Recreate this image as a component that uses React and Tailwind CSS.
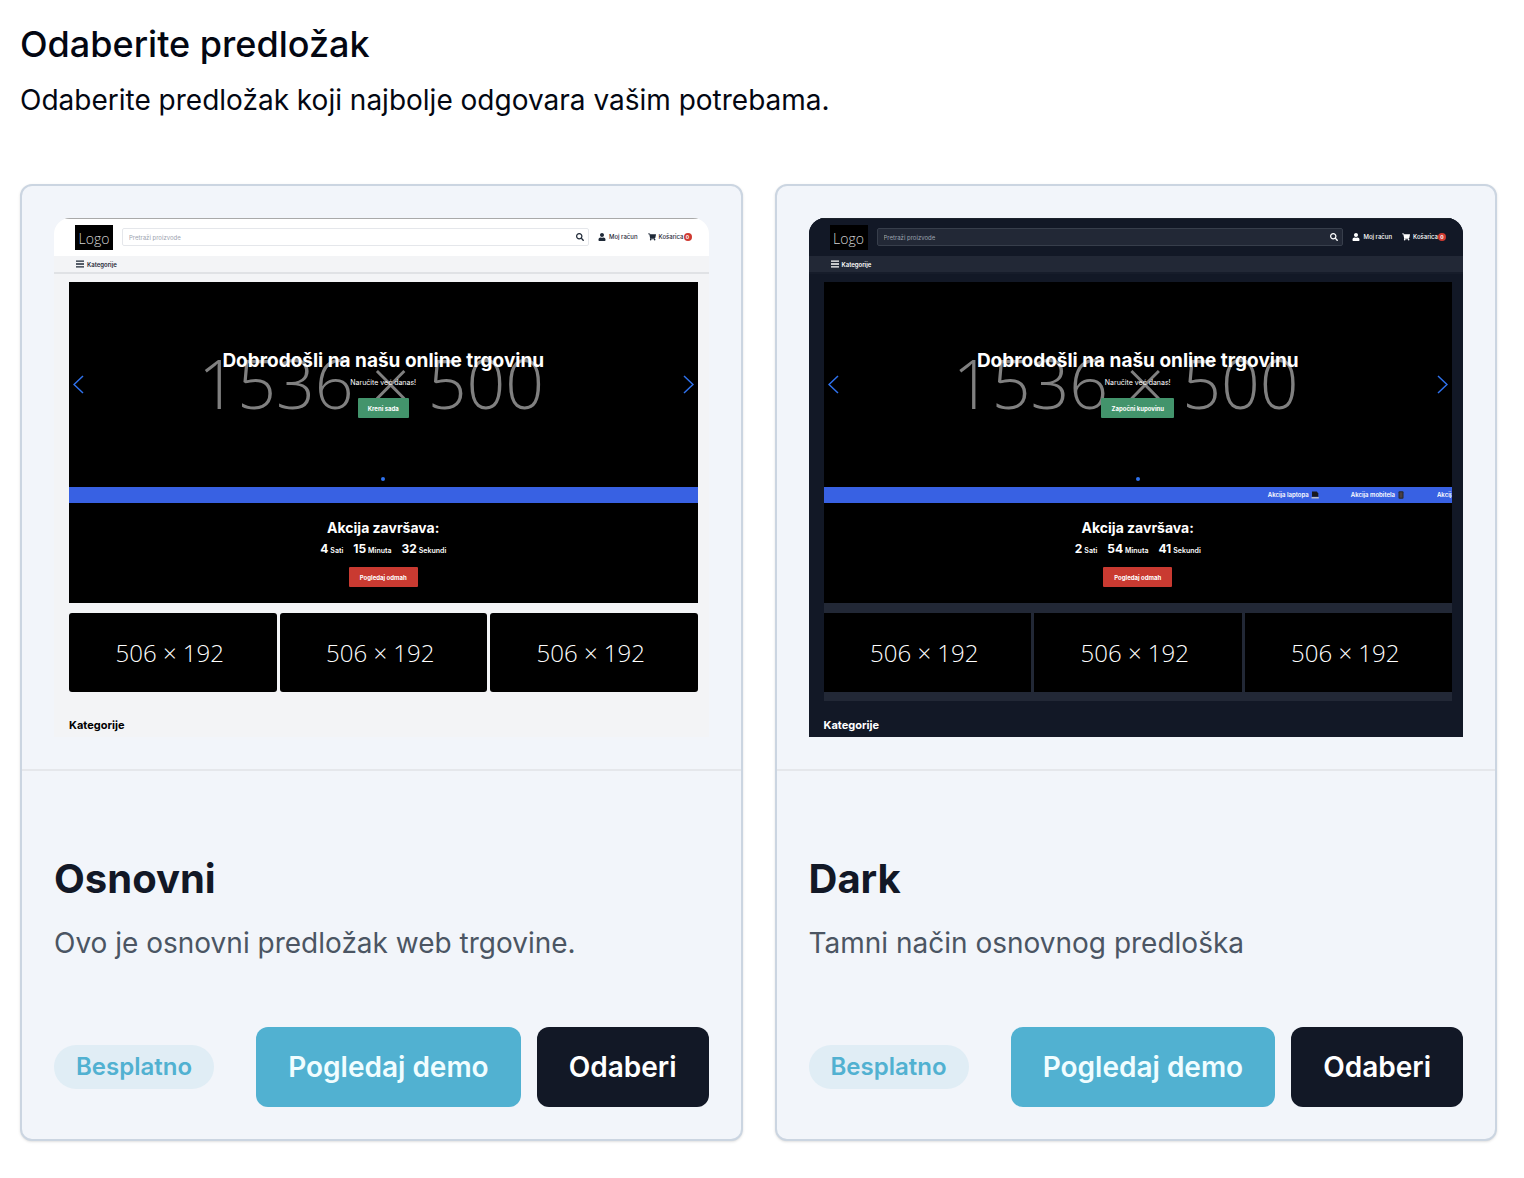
import React from "react";
import { FaSearch, FaShoppingCart, FaUser } from "react-icons/fa";

const light = {
  page: "bg-[#f3f4f6] text-black",
  header: "bg-white border-[#a9a9a9]",
  search: "bg-white border-[#e5e7eb] placeholder:text-[#9ca3af]",
  icon: "text-[#1f2937]",
  nav: "bg-[#f3f4f6] border-[#e0e2e5]",
  offers: "",
  tile: "rounded-[3px]",
};

const dark = {
  page: "bg-[#121826] text-white",
  header: "bg-[#121826] border-[#1c222b]",
  search: "bg-[#222836] border-[#373e4b] placeholder:text-[#9ca3af]",
  icon: "text-white",
  nav: "bg-[#222836] border-[#161c2a]",
  offers: "bg-[#222836]",
  tile: "",
};

const templates = [
  {
    id: "osnovni",
    name: "Osnovni",
    description: "Ovo je osnovni predložak web trgovine.",
    theme: light,
    cta: "Kreni sada",
    time: ["4", "15", "32"],
    ticker: false,
  },
  {
    id: "dark",
    name: "Dark",
    description: "Tamni način osnovnog predloška",
    theme: dark,
    cta: "Započni kupovinu",
    time: ["2", "54", "41"],
    ticker: true,
  },
];

const units = ["Sati", "Minuta", "Sekundi"];

function Chevron({ flip }) {
  return (
    <svg viewBox="0 0 11 19" className="h-[19px] w-[11px]" fill="none" stroke="#2f72ee" strokeWidth="1.5" aria-hidden="true">
      <path d={flip ? "M1 1l9 8.500L1 18" : "M10 1L1 9.500l9 8.500"} />
    </svg>
  );
}

function Bars() {
  return (
    <svg viewBox="0 0 8 8" className="size-2" fill="none" stroke="currentColor" strokeWidth="1.3" aria-hidden="true">
      <path d="M0 1.200h8M0 4h8M0 6.800h8" />
    </svg>
  );
}

function Laptop() {
  return (
    <svg viewBox="0 0 8 8" className="size-2" aria-hidden="true">
      <path d="M1 .5h4.800l1.500 2v3.300H1z" fill="#18181b" />
      <path d="M.5 6h7.300v1.500H.5z" fill="#b9bcc4" />
    </svg>
  );
}

function Phone() {
  return (
    <svg viewBox="0 0 8 8" className="size-2" aria-hidden="true">
      <rect x="1.500" y=".3" width="5" height="7.400" rx="1" fill="#27272a" />
      <rect x="2.500" y="1.300" width="3" height="5.400" fill="#4a4046" />
    </svg>
  );
}

function StorePreview({ id, theme, cta, time, ticker }) {
  return (
    <div className={`overflow-hidden rounded-t-2xl ${theme.page}`}>
      <div className={`flex h-[38px] items-center border-t pr-[17px] pb-px pl-[21px] ${theme.header}`}>
        <div className="flex h-[25px] w-[38px] items-center justify-center bg-black pt-1 font-['Open_Sans'] text-[14px] leading-5 font-light text-[#d4d4d4]">
          Logo
        </div>
        <div className="relative ml-[9px] flex flex-1 items-center">
          <input
            id={`search-${id}`}
            type="text"
            aria-label="Pretraži proizvode"
            placeholder="Pretraži proizvode"
            className={`h-[18px] w-full rounded-[2px] border px-[6px] text-[6px] outline-none ${theme.search}`}
          />
          <button type="button" aria-label="Traži" className={`absolute right-[5px] ${theme.icon}`}>
            <FaSearch className="size-2" />
          </button>
        </div>
        <a href="#racun" className={`ml-[9px] flex items-center gap-[3px] text-[6px] leading-[8px] font-medium ${theme.icon}`}>
          <FaUser className="size-2" />
          Moj račun
        </a>
        <a href="#kosarica" className={`ml-[10px] flex items-center text-[6px] leading-[8px] font-medium ${theme.icon}`}>
          <FaShoppingCart className="mr-[3px] size-2" />
          Košarica
          <span className="flex size-[8px] items-center justify-center rounded-full bg-[#cf3a31] text-[5px] font-bold text-white">0</span>
        </a>
      </div>
      <div className={`flex h-[18px] items-center gap-[3px] border-b-2 pl-[22px] text-[6px] font-semibold ${theme.nav} ${theme.icon}`}>
        <Bars />
        Kategorije
      </div>

      <div className="mt-2 mr-[11px] ml-[15px]">
        <div className="relative flex h-[205px] flex-col items-center overflow-hidden bg-black pt-[67px] text-white">
          <div className="absolute inset-x-0 top-[53px] pr-6 text-center font-['Open_Sans'] text-[68px] leading-[96px] font-light whitespace-nowrap text-[#808080]">
            1536 × 500
          </div>
          <h3 className="relative text-[19px] leading-6 font-bold whitespace-nowrap">Dobrodošli na našu online trgovinu</h3>
          <p className="relative mt-[5px] text-[7px] leading-[10px]">Naručite već danas!</p>
          <button type="button" className="relative mt-[10px] h-5 rounded-[1px] bg-[#43946c] px-[10px] text-[6px] font-bold">
            {cta}
          </button>
          <button type="button" aria-label="Prethodno" className="absolute top-[93px] left-1">
            <Chevron />
          </button>
          <button type="button" aria-label="Sljedeće" className="absolute top-[93px] right-1">
            <Chevron flip />
          </button>
          <span className="absolute bottom-[6px] left-1/2 size-[4px] -translate-x-1/2 rounded-full bg-[#2f72ee]" />
        </div>

        <div className="flex h-4 items-center justify-end overflow-hidden bg-[#3861e3] text-[6px] leading-4 font-semibold whitespace-nowrap text-white">
          {ticker && (
            <>
              <span className="flex items-center gap-[2px]">Akcija laptopa <Laptop /></span>
              <span className="ml-8 flex items-center gap-[2px]">Akcija mobitela <Phone /></span>
              <span className="ml-8 w-[15px] overflow-hidden">Akcija</span>
            </>
          )}
        </div>

        <div className="flex flex-col items-center bg-black pt-[15px] pb-4 text-white">
          <h4 className="text-[14px] leading-5 font-bold">Akcija završava:</h4>
          <div className="mt-1 flex h-4 items-center gap-[10px]">
            {time.map((value, i) => (
              <div key={units[i]} className="flex items-baseline gap-[2px] leading-4">
                <span className="text-[12px] font-bold">{value}</span>
                <span className="text-[7px] font-semibold">{units[i]}</span>
              </div>
            ))}
          </div>
          <button type="button" className="mt-[9px] h-5 rounded-[1px] bg-[#c93a31] px-[11px] text-[6px] font-bold">
            Pogledaj odmah
          </button>
        </div>

        <div className={`grid grid-cols-3 gap-[3px] pt-[10px] pb-[9px] ${theme.offers}`}>
          {[0, 1, 2].map((n) => (
            <div
              key={n}
              className={`flex h-[79px] items-center justify-center bg-black pr-[6px] font-['Open_Sans'] text-[24px] font-light text-white ${theme.tile}`}
            >
              506 × 192
            </div>
          ))}
        </div>
        <h4 className="pt-[15px] pb-[3px] text-[11px] leading-[18px] font-bold">Kategorije</h4>
      </div>
    </div>
  );
}

function TemplateCard({ template }) {
  return (
    <article className="rounded-xl border-2 border-[#cbd5e1] bg-[#f2f5fa] shadow-sm">
      <div className="border-b-2 border-[#e5e7eb] p-8">
        <StorePreview {...template} />
      </div>
      <div className="px-8 pt-[88px] pb-8">
        <h2 className="text-[40px] leading-10 font-bold text-[#121826]">{template.name}</h2>
        <p className="mt-6 text-[28px] leading-10 text-[#4b5563]">{template.description}</p>
        <div className="mt-16 flex items-center justify-between">
          <span className="rounded-full bg-[#e0edf5] px-[22px] py-1.5 text-[24px] leading-8 font-semibold text-[#51b1d1]">
            Besplatno
          </span>
          <div className="flex gap-4">
            <button type="button" className="h-20 rounded-xl bg-[#51b1d1] px-8 text-[28px] font-semibold text-[#f0fdff]">
              Pogledaj demo
            </button>
            <button type="button" className="h-20 rounded-xl bg-[#121826] px-8 text-[28px] font-semibold text-white">
              Odaberi
            </button>
          </div>
        </div>
      </div>
    </article>
  );
}

export default function App() {
  return (
    <main className="min-h-screen bg-white pt-6 pr-[27px] pb-9 pl-5 font-['Inter',sans-serif] text-[#030712]">
      <h1 className="text-[36px] leading-10 font-medium">Odaberite predložak</h1>
      <p className="mt-4 text-[28px] leading-10">Odaberite predložak koji najbolje odgovara vašim potrebama.</p>
      <section className="mt-16 grid grid-cols-2 gap-8">
        {templates.map((t) => (
          <TemplateCard key={t.id} template={t} />
        ))}
      </section>
    </main>
  );
}
